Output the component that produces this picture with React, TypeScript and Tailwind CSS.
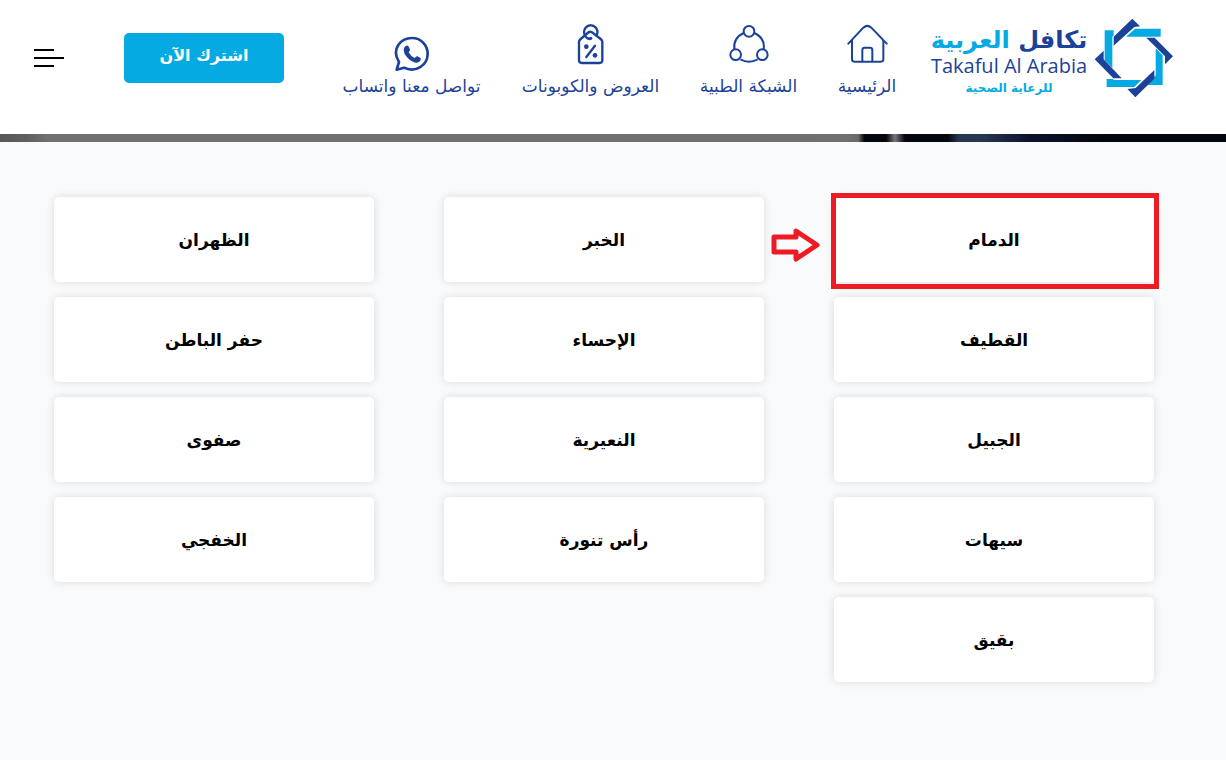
import type { ReactNode } from "react";

const CITIES = [
  "الدمام",
  "الخبر",
  "الظهران",
  "القطيف",
  "الإحساء",
  "حفر الباطن",
  "الجبيل",
  "النعيرية",
  "صفوى",
  "سيهات",
  "رأس تنورة",
  "الخفجي",
  "بقيق",
];

const ACTIVE_CITY = "الدمام";

export default function App() {
  return (
    <div dir="rtl" className="min-h-screen bg-[#f9fafc] font-['DejaVu_Sans',sans-serif] text-black">
      <Header />
      <HeroStrip />
      <main className="pt-[55px] pr-[72px] pb-[78px] pl-[54px]">
        <ul className="grid grid-cols-3 gap-x-[70px] gap-y-[15px]">
          {CITIES.map((city) => (
            <li key={city} className="relative">
              <a
                href="#"
                className="flex h-[85px] items-center justify-center rounded-[5px] bg-white pt-0.5 text-[17px] font-bold shadow-[0_0_8px_rgba(0,0,0,0.13)]"
              >
                {city}
              </a>
              {city === ACTIVE_CITY && <Highlight />}
            </li>
          ))}
        </ul>
      </main>
    </div>
  );
}

function Header() {
  return (
    <header className="flex items-center bg-white pt-[18px] pr-[52px] pb-9 pl-[34px]">
      <Logo />
      <nav className="mr-8 flex gap-10 pt-1.5">
        <NavItem label="الرئيسية" width="w-[58px]">
          <HomeIcon />
        </NavItem>
        <NavItem label="الشبكة الطبية" width="w-[99px]">
          <NetworkIcon />
        </NavItem>
        <NavItem label="العروض والكوبونات" width="w-[137px]">
          <CouponIcon />
        </NavItem>
        <NavItem label="تواصل معنا واتساب" width="w-[141px]">
          <WhatsappIcon />
        </NavItem>
      </nav>
      <div className="mr-auto flex items-center gap-[60px]">
        <button
          type="button"
          className="h-[50px] w-40 rounded-[5px] bg-[#06aae2] pb-1 text-base font-bold text-white"
        >
          اشترك الآن
        </button>
        <button type="button" aria-label="القائمة" className="flex w-[30px] flex-col items-end gap-1.5">
          <span className="h-0.5 w-5 bg-black" />
          <span className="h-0.5 w-[30px] bg-black" />
          <span className="h-0.5 w-5 bg-black" />
        </button>
      </div>
    </header>
  );
}

function NavItem({ label, width, children }: { label: string; width: string; children: ReactNode }) {
  return (
    <a href="#" className={`flex flex-col items-center text-[#1b4298] ${width}`}>
      <span className="flex h-12">{children}</span>
      <span className="mt-0.5 text-[17px] leading-6 whitespace-nowrap">{label}</span>
    </a>
  );
}

function Logo() {
  return (
    <a href="#" className="flex shrink-0 items-center gap-1">
      <svg viewBox="28 24 240 240" className="size-20">
        <g fill="#06aae2">
          <path d="M60 61H87V76L83 80V174L60 150Z" />
          <path d="M151 56H228V80H124Z" />
          <path d="M213 115L234 136V225H182L213 196Z" />
          <path d="M66 207H84L88 210H170L149 231H66Z" />
        </g>
        <g fill="#1b4298">
          <path d="M87 80L143 26L166 49L149 51L87 107Z" />
          <path d="M185 83H210L265 139L241 163V139Z" />
          <path d="M209 180V206L152 262L128 237L153 234Z" />
          <path d="M30 148L57 122V148L111 205H86Z" />
        </g>
      </svg>
      <span className="flex w-[162px] flex-col items-center pt-2 whitespace-nowrap">
        <span className="text-2xl leading-7 font-bold text-[#1b4298]">
          تكافل <span className="text-[#06aae2]">العربية</span>
        </span>
        <span dir="ltr" className="font-['Open_Sans',sans-serif] text-xl leading-6 text-[#1b4298]">
          Takaful Al Arabia
        </span>
        <span className="text-xs leading-5 font-bold text-[#06aae2]">للرعاية الصحية</span>
      </span>
    </a>
  );
}

// sliver of the hero photo that shows under the header
function HeroStrip() {
  return (
    <div className="h-2 bg-[linear-gradient(90deg,#5a5856_0%,#605e5b_2%,#707173_4%,#6f7072_69%,#68696b_70%,#05070f_70.5%,#05070f_72.3%,#77777a_73%,#05070f_73.8%,#05070f_77.3%,#26374f_78.2%,#26374f_80%,#0c142c_84%,#04060f_90%,#04060f_100%)]" />
  );
}

function Highlight() {
  return (
    <>
      <span className="pointer-events-none absolute -top-1 -right-[5px] -bottom-[7px] -left-[3px] border-[5px] border-[#ed1c24]" />
      <svg
        viewBox="0 0 50 36"
        fill="none"
        stroke="#ed1c24"
        strokeWidth="5"
        strokeLinejoin="round"
        className="absolute top-[30px] right-full mr-[13px] h-9 w-[50px]"
      >
        <path d="M3 10H25V4L46 18L25 32V25H3Z" />
      </svg>
    </>
  );
}

function HomeIcon() {
  return (
    <svg
      viewBox="502 42 123 120"
      fill="none"
      stroke="currentColor"
      strokeWidth="6"
      strokeLinecap="round"
      className="h-10 w-[41px]"
    >
      <path d="M506 101L551 53Q563 42 575 53L621 101" />
      <path d="M517 92V148Q517 155 524 155H604Q611 155 611 148V92" />
      <path d="M548 153V120Q548 113 555 113H571Q578 113 578 120V153" />
    </svg>
  );
}

function NetworkIcon() {
  return (
    <svg viewBox="147 42 120 120" fill="none" stroke="currentColor" strokeWidth="6" className="size-10">
      <circle cx="207" cy="64" r="16" />
      <circle cx="167" cy="134" r="16" />
      <circle cx="247" cy="134" r="16" />
      <path d="M191 69Q159 84 163 118" />
      <path d="M223 69Q256 84 251 118" />
      <path d="M181 148Q207 162 233 148" />
    </svg>
  );
}

function CouponIcon() {
  return (
    <svg
      viewBox="232 41 81 123"
      fill="none"
      stroke="currentColor"
      strokeWidth="7"
      strokeLinecap="round"
      className="h-[41px] w-[27px]"
    >
      <path d="M238 95Q238 90 243 86L264 68Q272 61 280 68L303 86Q308 90 308 95V150Q308 158 300 158H246Q238 158 238 150Z" />
      <path d="M292 72A20 20 0 1 0 254 70Q257 83 270 86" />
      <path d="M286 106L260 140" />
      <g fill="currentColor" stroke="none">
        <circle cx="273" cy="84" r="5" />
        <circle cx="260" cy="109" r="7" />
        <circle cx="286" cy="135" r="7" />
      </g>
    </svg>
  );
}

function WhatsappIcon() {
  return (
    <svg viewBox="222 46 108 108" fill="none" stroke="currentColor" className="mt-3 size-9">
      <path
        strokeWidth="8"
        strokeLinejoin="round"
        d="M230 147L237 124C213 86 241 52 276 52C304 52 323 75 323 100C323 133 287 158 252 141Z"
      />
      <path
        fill="currentColor"
        stroke="none"
        d="M258 75Q264 73 267 79L270 87Q270 90 266 95Q272 107 284 112Q289 106 292 107L302 112Q304 123 291 126C276 127 251 106 251 87Q251 79 258 75Z"
      />
    </svg>
  );
}
